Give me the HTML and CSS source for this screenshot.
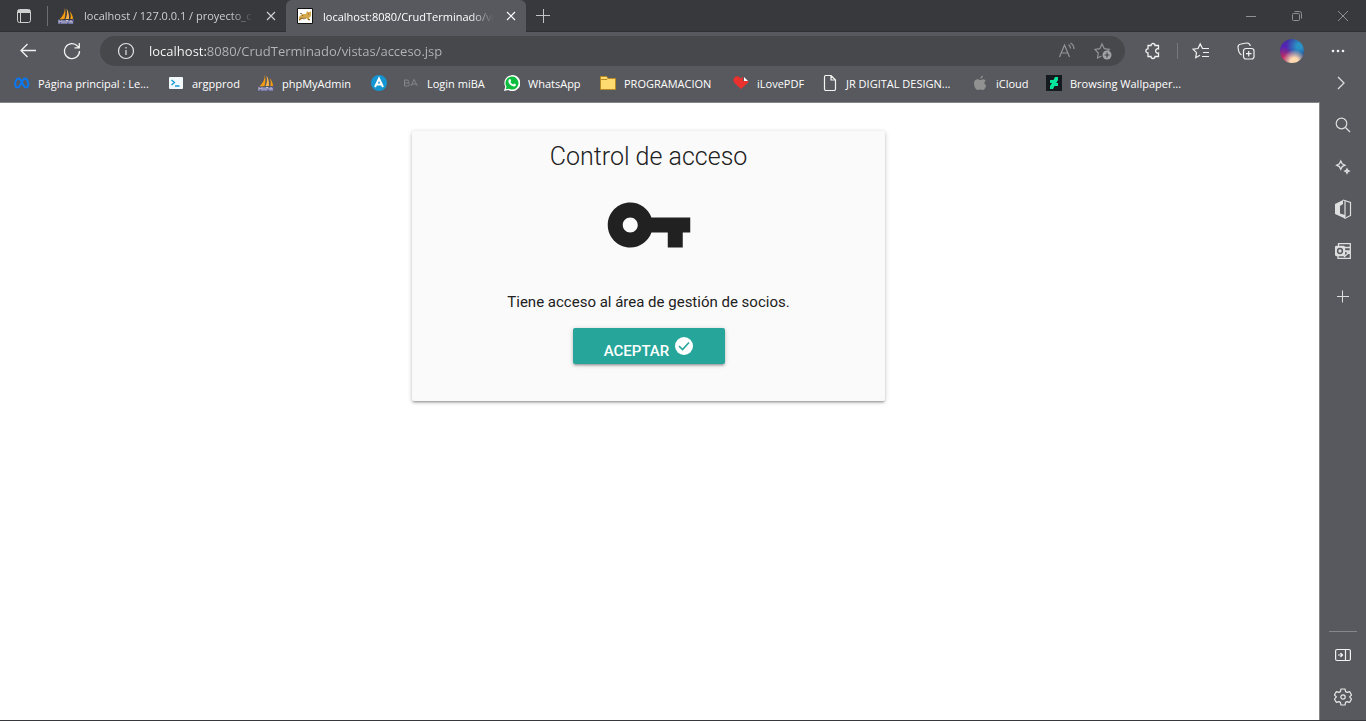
FILE: index.html
```html
<!DOCTYPE html>
<html lang="es">
<head>
<meta charset="utf-8">
<meta name="viewport" content="width=device-width, initial-scale=1">
<title>Control de acceso</title>
<link rel="stylesheet" href="styles.css">
</head>
<body>
<svg class="defs" aria-hidden="true">
  <symbol id="sailboat" viewBox="0 0 16 16">
    <path fill="#f89c0e" d="M6.800 0C7 4 5 8 1.500 11.500L6.500 11C7.500 7 7.800 3 6.800 0z"/>
    <path fill="#f7b24a" d="M8.500 .5C9.500 5 9 8 7.500 11L11 11C11.300 7 10.500 3.500 8.500 .5z"/>
    <path fill="#f89c0e" d="M11.500 3C13 6 13 8.500 12.300 11L15 11C15 8 13.500 5 11.500 3z"/>
    <path fill="#5d5f93" d="M0 11l2 1h12l2-1-.8 5H.5z"/>
    <path fill="none" stroke="#c9c9dd" d="M1 15.500v-3l1.500 1.500L4 12.500v3M6 12.500v3M8 15.500v-3h2v2M12 15.500v-2.500h2v2.500"/>
  </symbol>
</svg>

<div class="browser">
  <header class="chrome">
    <div class="tabstrip">
      <button class="tab-actions" aria-label="Acciones de pestañas">
        <svg class="i16" viewBox="0 0 16 16" fill="none" stroke="#d0d0d1"><rect x="1.500" y="1.500" width="13" height="13" rx="2"/><path d="M2 3.500h12" stroke-width="3"/><path d="M4.500 5v9"/></svg>
      </button>
      <div class="tab">
        <svg class="i16"><use href="#sailboat"/></svg>
        <a class="tab-title" href="#">localhost / 127.0.0.1 / proyecto_c</a>
        <button class="close" aria-label="Cerrar pestaña"><svg class="i10" viewBox="0 0 10 10" fill="none" stroke="currentColor" stroke-width="1.200"><path d="M1 1l8 8M9 1L1 9"/></svg></button>
      </div>
      <div class="tab active">
        <svg class="i16" viewBox="0 0 16 16"><path fill="#fff" stroke="#111" d="M.5.500h15v15H.5z"/><path fill="#d6a84c" d="M2 9l3-3 4 0 1-3 1 1h2l1-1v5l-2 2 1 3-2-1-2-2-4 1-3 2z"/><path stroke="#5c4520" fill="none" stroke-width=".7" d="M2 12l3-2 2 1 2-1M5 7l1 1M11 6h1M3 5.500l2 0m6 6h2"/></svg>
        <a class="tab-title" href="#">localhost:8080/CrudTerminado/vi</a>
        <button class="close" aria-label="Cerrar pestaña"><svg class="i10" viewBox="0 0 10 10" fill="none" stroke="currentColor" stroke-width="1.200"><path d="M1 1l8 8M9 1L1 9"/></svg></button>
      </div>
      <button class="new-tab" aria-label="Nueva pestaña"><svg class="i16" viewBox="0 0 16 16" stroke="#c4c4c6"><path d="M1 7.500h14M8.500 1v14"/></svg></button>
      <div class="window-controls">
        <button aria-label="Minimizar"><svg class="i10" viewBox="0 0 10 10" stroke="#8f9092"><path d="M0 5.500h10"/></svg></button>
        <button aria-label="Restaurar"><svg class="i10" viewBox="0 0 10 10" fill="none" stroke="#8f9092"><rect x=".5" y="2.500" width="7" height="7" rx="1"/><path d="M2.500.500h5a2 2 0 0 1 2 2v5"/></svg></button>
        <button aria-label="Cerrar"><svg class="i10" viewBox="0 0 10 10" stroke="#8f9092"><path d="M0 0l10 10M10 0L0 10"/></svg></button>
      </div>
    </div>

    <div class="toolbar">
      <button aria-label="Atrás"><svg class="i18" viewBox="0 0 18 18" fill="none" stroke="#f1f1f1" stroke-width="1.300"><path d="M17 8.500H2M8.500 2L2 8.500 8.500 15"/></svg></button>
      <button aria-label="Actualizar"><svg class="i18" viewBox="0 0 18 18" fill="none" stroke="#f1f1f1" stroke-width="1.300"><path d="M16.500 9A7.500 7.500 0 1 1 14.500 4L16 5.500M16.300 1v4.800h-4.800"/></svg></button>
      <div class="address">
        <svg class="i18" viewBox="0 0 18 18" fill="none" stroke="#e4e4e5" stroke-width="1.200"><circle cx="9" cy="9" r="7.500"/><path d="M9 8v5M9 5v1.500"/></svg>
        <input class="url" type="text" aria-label="Dirección" value="localhost:8080/CrudTerminado/vistas/acceso.jsp">
        <button aria-label="Leer en voz alta"><svg class="i18" viewBox="0 0 18 18" fill="none" stroke="#949598" stroke-width="1.200"><path d="M1.500 15L6.500 3l5 12M3.200 11h6.600M10.500 2.500q2 1.500 2 4M12.500 1q3.500 2 3.500 6"/></svg></button>
        <button aria-label="Agregar a favoritos"><svg class="i18" viewBox="0 0 18 18" fill="none" stroke="#949598" stroke-width="1.200"><path d="M7.500 14l-4 2 .8-5L1 7.500l4.800-.8L8 2l2.300 4.700 5 .8-1.600 1.600"/><circle cx="13" cy="13" r="4.500" fill="#a2a3a5" stroke="none"/><path stroke="#47484c" d="M13 10.500v5M10.500 13h5"/></svg></button>
      </div>
      <div class="tools">
        <button aria-label="Extensiones"><svg class="i18" viewBox="0 0 18 18" fill="none" stroke="#f1f1f1" stroke-width="1.300"><path d="M4 3.500h3a2 2 0 1 1 4 0h3.500v3.300a2.200 2.200 0 1 0 0 4.200v3.500H11a2 2 0 1 1-4 0H4V11a2.100 2.100 0 1 1 0-4.200z"/></svg></button>
        <span class="divider"></span>
        <button aria-label="Favoritos"><svg class="i18" viewBox="0 0 18 18" fill="none" stroke="#f1f1f1" stroke-width="1.200"><path d="M8 13.300l-4.300 2.400.8-5L1 7.200l5-.7 2.200-4.600L10.500 6.500H17M11 10.500h6M10 14.500h7"/></svg></button>
        <button aria-label="Colecciones"><svg class="i18" viewBox="0 0 18 18" fill="none" stroke="#f1f1f1" stroke-width="1.200"><rect x="6.500" y="6.500" width="10.500" height="10.500" rx="2.500"/><path d="M11.700 9v5.500M9 11.700h5.500M4.500 13C2 11.500 1.500 9.500 1.200 6.500L1 5C1 3 2 2.300 4 2l5.500-1C12 .8 13 2 13.300 4"/></svg></button>
        <button aria-label="Perfil"><span class="avatar"></span></button>
        <button aria-label="Configuración y más"><svg class="i18" viewBox="0 0 18 18" fill="#f1f1f1"><circle cx="4" cy="9" r="1.300"/><circle cx="9" cy="9" r="1.300"/><circle cx="14" cy="9" r="1.300"/></svg></button>
      </div>
    </div>

    <nav class="bookmarks" aria-label="Favoritos">
      <a href="#"><svg class="i16" viewBox="0 0 16 16" fill="none" stroke="#0879f5" stroke-width="2"><path d="M1.500 11C.5 7 2.500 3 5 3.500c2.500.5 4 9 7 9 2.500 0 2.500-3 2-5C13.500 5 12.500 3.500 11 3.500c-3 0-4.500 9-7.500 9q-1.500 0-2-1.500z"/></svg>Página principal : Le...</a>
      <a href="#"><svg class="i16" viewBox="0 0 16 16"><rect x="1" y="2" width="14" height="12" rx="1" fill="#f1f9fd"/><path d="M3.500 5l3 2.500-3 2.500M7 11h4.500" fill="none" stroke="#139ad6" stroke-width="1.300"/></svg>argpprod</a>
      <a href="#"><svg class="i16"><use href="#sailboat"/></svg>phpMyAdmin</a>
      <a href="#" aria-label="A"><svg class="i16" viewBox="0 0 16 16"><circle cx="8" cy="8" r="8" fill="#1596d3"/><path d="M4 12l4-8.500L12 12M6 9.500h4" fill="none" stroke="#fff" stroke-width="2"/></svg></a>
      <a href="#"><svg class="i16" viewBox="0 0 16 16" fill="none" stroke="#85868a"><path d="M1.500 5v6h3q2 0 2-1.500T5 8H2m3 0q1-.5 1-1.500T4 5H1.500M8 11l3-6.500L14.500 11M9 9h4"/></svg>Login miBA</a>
      <a href="#"><svg class="i16" viewBox="0 0 16 16"><path d="M0 16l1.200-4.300A8 8 0 1 1 4.300 15z" fill="#fff"/><path d="M1.800 14.300l.7-2.700a6.500 6.500 0 1 1 2.200 2.100z" fill="#0dbd3d"/><path d="M5.500 4l1 .2.700 1.800-.8 1q.9 1.800 2.700 2.500l1-1 2 1q-.4 2.200-2.200 2Q5 10.500 4.400 6.500 4.200 5 5.500 4z" fill="#fff"/></svg>WhatsApp</a>
      <a href="#"><svg class="i16" viewBox="0 0 16 16"><path d="M.5 14.500v-13h6l1.500 2h7.500v11z" fill="#ffda70" stroke="#b78b22"/><path d="M1 4.500h6l1-1" fill="none" stroke="#b78b22"/></svg>PROGRAMACION</a>
      <a href="#"><svg class="i16" viewBox="0 0 16 16"><path d="M8 14L1 7.500C-1 4 2 .5 5.500 1.500L8 3.500 10 1.500V6h5.500q0 1.500-1 2.200z" fill="#e9312d"/><path d="M11 2l4 4H11z" fill="#fff"/></svg>iLovePDF</a>
      <a href="#"><svg class="i16" viewBox="0 0 16 16" fill="none" stroke="#f3f3f3" stroke-width="1.200"><path d="M2.500 2q0-1.500 1.500-1.500h5l4.500 4.500v9q0 1.500-1.500 1.500H4q-1.500 0-1.500-1.500zM9 .5V5h4.500"/></svg>JR DIGITAL DESIGN...</a>
      <a href="#"><svg class="i16" viewBox="0 0 16 16" fill="#919191"><path d="M11 .5q.1 2.500-2.700 3.300Q8.200 1.300 11 .5zM8 5c1 0 2-.9 3.200-.8q1.700.1 2.600 1.400-3.200 2.500.5 5.200Q12.500 15 11 15c-1 0-1.500-.6-2.700-.6s-1.700.6-2.600.6C3.500 15 2 10.500 2 8.500c0-2.800 1.700-4.200 3.500-4.200C6.600 4.300 7.300 5 8 5z"/></svg>iCloud</a>
      <a href="#"><svg class="i16" viewBox="0 0 16 16"><path d="M0 0h16v16H0z" fill="#141b20"/><path d="M12 2v3L10.200 8H12v3H8.500L7 14H4v-3l2-3H4V5h3.500L9 2z" fill="#05e79a"/></svg>Browsing Wallpaper...</a>
      <button class="more" aria-label="Más favoritos"><svg class="i16" viewBox="0 0 16 16" fill="none" stroke="#dededf" stroke-width="1.300"><path d="M5 2l6 6-6 6"/></svg></button>
    </nav>
  </header>

  <div class="body">
    <main class="page">
      <section class="card">
        <h1>Control de acceso</h1>
        <svg class="key" viewBox="0 0 24 24" fill="#212121"><path d="M12.650 10C11.830 7.670 9.610 6 7 6c-3.310 0-6 2.690-6 6s2.690 6 6 6c2.610 0 4.830-1.670 5.650-4H17v4h4v-4h2v-4H12.650zM7 14c-1.100 0-2-.9-2-2s.9-2 2-2 2 .9 2 2-.9 2-2 2z"/></svg>
        <p>Tiene acceso al área de gestión de socios.</p>
        <button class="accept">Aceptar
          <svg class="i18" viewBox="0 0 18 18"><circle cx="9" cy="9" r="9" fill="#fff"/><path d="M4 9l3.500 3.500L14 5.500" fill="none" stroke="#26a69a" stroke-width="1.600"/></svg>
        </button>
      </section>
    </main>
    <aside class="sidebar">
      <button aria-label="Buscar"><svg class="i16" viewBox="0 0 16 16" fill="none" stroke="#dededf" stroke-width="1.200"><circle cx="6.500" cy="6.500" r="5.300"/><path d="M10.500 10.500L15 15"/></svg></button>
      <button aria-label="Descubrir"><svg class="i16" viewBox="0 0 16 16" fill="none" stroke="#dededf" stroke-width="1.300"><path d="M5.800 2l1.400 2.800L10 6.200 7.200 7.600 5.800 10.400 4.400 7.600 1.600 6.200 4.400 4.800zM12 10l.7 1.400 1.400.7-1.400.7-.7 1.400-.7-1.400-1.400-.7 1.400-.7z"/></svg></button>
      <button aria-label="Office"><svg class="i20" viewBox="0 0 20 20"><path d="M2 5l8-4v4L7 7v7.500l5 1.500v3.500L2 15z" fill="#dededf"/><path d="M10 1l7.500 2.500v13l-6 3M12 2v16" fill="none" stroke="#dededf" stroke-width="1.200"/></svg></button>
      <button aria-label="Outlook"><svg class="i16" viewBox="0 0 16 16" fill="none" stroke="#dededf" stroke-width="1.300"><path d="M3.500 3V.7h11.800v14.600H3V13M9 4.500h6M10 8l5.500 3M15.500 8L9 14M10 8h5"/><rect x=".5" y="3.500" width="9" height="9" rx="1" fill="#dededf"/><circle cx="5" cy="8" r="2.400" stroke="#58595e" stroke-width="1.500"/></svg></button>
      <button aria-label="Agregar"><svg class="i16" viewBox="0 0 16 16" stroke="#dededf"><path d="M2 7.500h12M7.500 1.500v12"/></svg></button>
      <hr>
      <button aria-label="Ocultar barra lateral"><svg class="i16" viewBox="0 0 16 16" fill="none" stroke="#f1f1f1" stroke-width="1.200"><rect x=".6" y="2.500" width="14.800" height="11" rx="1.500"/><path d="M10.500 3v10M3 8h4.500M5.500 6l2 2-2 2"/></svg></button>
      <button aria-label="Configuración"><svg class="i18" viewBox="0 0 18 18" fill="none" stroke="#e6e6e6" stroke-width="1.200"><path d="M7 1h4l.6 2.600 1.500.8 2.500-.8 2 3.400-2 1.900 2 2.200-2 3.300-2.500-.8-1.500.8L11 17H7l-.6-2.600-1.500-.8-2.500.8-2-3.300 2-2.200-2-1.900 2-3.400 2.500.8 1.500-.8z" stroke-linejoin="round"/><circle cx="9" cy="9" r="2.200"/></svg></button>
    </aside>
  </div>
</div>
</body>
</html>
```
FILE: styles.css
```css
* { box-sizing: border-box; }
body {
  margin: 0;
  font-family: "Open Sans", "Noto Sans", sans-serif;
  font-size: 11px;
  color: #fff;
}
button {
  display: flex;
  align-items: center;
  justify-content: center;
  padding: 0;
  border: 0;
  background: none;
  color: inherit;
  font: inherit;
}
a { color: inherit; text-decoration: none; }
svg { display: block; flex: none; }
.defs { position: absolute; width: 0; height: 0; }
.i10 { width: 10px; height: 10px; }
.i16 { width: 16px; height: 16px; }
.i18 { width: 18px; height: 18px; }
.i20 { width: 20px; height: 20px; }

.browser {
  display: flex;
  flex-direction: column;
  min-height: 100vh;
  background: #58595e;
  border-bottom: 1px solid #37383c;
}

/* Tabs */
.tabstrip {
  display: flex;
  height: 32px;
  background: #38393d;
  border-bottom: 1px solid #303135;
}
.tab-actions { width: 47px; }
.tab {
  display: flex;
  align-items: center;
  gap: 10px;
  width: 239px;
  padding: 0 8px 0 11px;
  color: #cfcfd0;
}
.tab.active {
  width: 240px;
  height: 32px;
  background: #58595e;
  border-radius: 6px 6px 0 0;
  color: #fff;
}
.tab-actions + .tab { background: linear-gradient(#6d6e71, #6d6e71) 0 50% / 1px 20px no-repeat; }
.tab-title {
  flex: 1;
  overflow: hidden;
  white-space: nowrap;
  -webkit-mask-image: linear-gradient(90deg, #000 calc(100% - 24px), transparent);
  mask-image: linear-gradient(90deg, #000 calc(100% - 24px), transparent);
}
.close { width: 14px; height: 20px; }
.new-tab { width: 34px; }
.window-controls { display: flex; margin-left: auto; }
.window-controls button { width: 46px; }

/* Toolbar */
.toolbar {
  display: flex;
  align-items: center;
  height: 38px;
  padding: 0 5px 0 6px;
}
.toolbar > button { width: 44px; height: 32px; }
.address {
  display: flex;
  flex: 1;
  align-items: center;
  gap: 14px;
  height: 30px;
  margin: 0 15px 0 6px;
  padding: 0 11px 0 17px;
  border-radius: 15px;
  background: #47484c;
}
.url {
  flex: 1;
  min-width: 0;
  padding: 0;
  border: 0;
  outline: 0;
  font: 13px "Open Sans", "Noto Sans", sans-serif;
  color: transparent;
  background: linear-gradient(90deg, #fff 58px, #b5b6b8 58px);
  -webkit-background-clip: text;
  background-clip: text;
}
.address button { width: 22px; }
.tools { display: flex; align-items: center; }
.tools button { width: 46px; height: 32px; }
.tools button:first-child { width: 26px; margin-right: 11px; }
.divider { width: 1px; height: 16px; margin-right: 1px; background: #77787c; }
.divider + button { width: 44px; }
.avatar {
  width: 24px;
  height: 24px;
  border-radius: 50%;
  background:
    radial-gradient(circle at 60% 95%, #ffd9b0 15%, transparent 45%),
    radial-gradient(circle at 15% 80%, #c02a68 5%, transparent 40%),
    radial-gradient(circle at 80% 30%, #2b93c6 10%, transparent 50%),
    radial-gradient(circle at 20% 35%, #5a22b8, #253c8c 70%);
}

/* Bookmarks */
.bookmarks {
  display: grid;
  grid-template-columns: 154px 90px 113px 32px 101px 96px 133px 89px 150px 74px auto 1fr;
  align-items: center;
  height: 32px;
  padding: 0 17px 6px 14px;
}
.bookmarks a { display: flex; align-items: center; gap: 8px; white-space: nowrap; }
.more { justify-self: end; }

/* Page and side bar */
.body { display: flex; flex: 1; }
.page {
  display: grid;
  flex: 1;
  grid-template-columns: 412fr 473fr 434fr;
  align-items: start;
  padding-top: 28px;
  background: #fff;
  border-top: 1px solid #858589;
  border-right: 1px solid #858589;
}
.card {
  display: flex;
  grid-column: 2;
  flex-direction: column;
  align-items: center;
  padding: 12px 12px 37px;
  border-radius: 2px;
  background: #fafafa;
  color: #212121;
  font-family: Roboto, sans-serif;
  font-size: 15px;
  line-height: 22px;
  box-shadow: 0 2px 2px 0 rgba(0,0,0,.14), 0 3px 1px -2px rgba(0,0,0,.12), 0 1px 5px 0 rgba(0,0,0,.2);
}
.card h1 { margin: 0; font-size: 25px; font-weight: 300; line-height: 28px; }
.key { width: 90px; height: 90px; margin: 9px 0 20px; }
.card p { margin: 1px 0 15px; }
.accept {
  align-items: flex-start;
  gap: 6px;
  width: 152px;
  height: 36px;
  padding-top: 12px;
  border-radius: 2px;
  background: #26a69a;
  color: #fff;
  font-weight: 500;
  text-transform: uppercase;
  box-shadow: 0 2px 2px 0 rgba(0,0,0,.14), 0 3px 1px -2px rgba(0,0,0,.12), 0 1px 5px 0 rgba(0,0,0,.2);
}
.accept svg { margin-top: -3px; }
.sidebar {
  display: flex;
  flex-direction: column;
  align-items: center;
  width: 46px;
  padding: 2px 0;
}
.sidebar button { width: 42px; height: 42px; }
.sidebar button:nth-of-type(5) { margin-top: 4px; }
.sidebar hr {
  width: 28px;
  margin: auto 0 2px;
  border: 0;
  border-top: 1px solid #85868a;
}
```
